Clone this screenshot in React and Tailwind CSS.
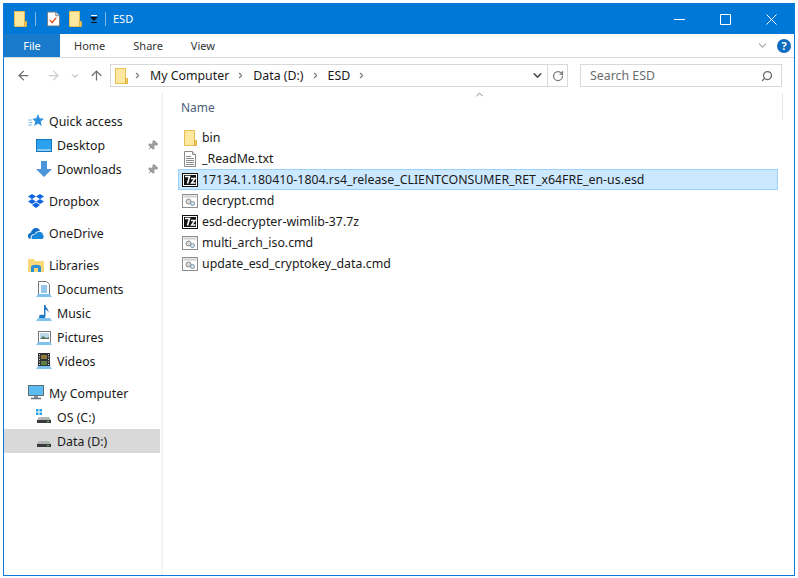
import React from 'react'
import { ArrowLeft, ArrowRight, ArrowUp, ChevronDown, ChevronRight, ChevronUp, RotateCw, Search, Pin } from 'lucide-react'

function Folder({ size = 16 }) {
  return (
    <svg width={size} height={size} viewBox="0 0 16 16" className="shrink-0">
      <path d="M2.500.5h10v15h-10z" fill="#fde08a" stroke="#e8bd52" />
      <path d="M12.500 10.500h2v5h-2z" fill="#f4cf6a" stroke="#e0ae3e" />
      <path d="M3 1h9v14H3z" fill="#fde89f" />
    </svg>
  )
}

function ChecklistIcon() {
  return (
    <svg width="13" height="16" viewBox="0 0 14 16" className="shrink-0">
      <path d="M.5.5h9l4 4v11H.5z" fill="#fff" stroke="#77787a" />
      <path d="M9.500.5v4h4" fill="#e6e6e6" stroke="#77787a" />
      <path d="M3 9l2.500 3L10 6.500" fill="none" stroke="#e2521d" strokeWidth="1.500" />
    </svg>
  )
}

function Qat() {
  return (
    <svg width="8" height="8" viewBox="0 0 8 8" className="shrink-0">
      <path d="M1 0h6v1H1z" fill="#fff" />
      <path d="M0 2h8L4 6z" fill="#111" />
      <path d="M1 7h6v1H1z" fill="#111" />
    </svg>
  )
}

function SevenZip() {
  return (
    <svg width="16" height="14" viewBox="0 0 16 14" className="shrink-0">
      <rect width="16" height="14" fill="#111" />
      <rect x="1" y="1" width="14" height="12" fill="#fff" />
      <rect x="2" y="2" width="12" height="10" fill="#111" />
      <path d="M3 3.500h4.500L5.500 10.500" fill="none" stroke="#fff" strokeWidth="1.600" />
      <path d="M9 5.500h4L9.500 10h4" fill="none" stroke="#fff" strokeWidth="1.400" />
    </svg>
  )
}

function CmdIcon() {
  return (
    <svg width="16" height="14" viewBox="0 0 16 14" className="shrink-0">
      <rect x=".5" y=".5" width="15" height="13" fill="#fff" stroke="#8e8e8e" />
      <rect x="1.500" y="1.500" width="13" height="2" fill="#cfcfcf" />
      <circle cx="6.500" cy="7.500" r="2.500" fill="#d9d9d9" stroke="#8a8a8a" />
      <circle cx="10.500" cy="9.500" r="2" fill="#d5e6f3" stroke="#7d93a5" />
    </svg>
  )
}

function TxtIcon() {
  return (
    <svg width="16" height="16" viewBox="0 0 16 16" className="shrink-0">
      <path d="M2.500.5h8l3 3v12h-11z" fill="#fff" stroke="#8a8a8a" />
      <path d="M10.500.5v3h3" fill="#e8e8e8" stroke="#8a8a8a" />
      <path d="M4 5.500h5M4 7.500h8M4 9.500h8M4 11.500h8M4 13.500h8" stroke="#8a8a8a" />
    </svg>
  )
}

function QuickAccess() {
  return (
    <svg width="16" height="16" viewBox="0 0 16 16">
      <path d="M10 1l1.700 4.300 4.300.4-3.300 2.900 1 4.400-3.700-2.400-3.700 2.400 1-4.400-3-2.900 4-.4z" fill="#2b8fe0" />
      <path d="M0 7h4M1 9.500h3M0 12h4" stroke="#7cc0ee" />
    </svg>
  )
}

function DesktopIcon() {
  return (
    <svg width="16" height="13" viewBox="0 0 16 13">
      <rect x=".5" y=".5" width="15" height="12" fill="#2aa2f0" stroke="#1476bd" />
      <path d="M1 11h14" stroke="#e8f5ff" />
    </svg>
  )
}

function DownloadsIcon() {
  return (
    <svg width="16" height="16" viewBox="0 0 16 16">
      <path d="M5 0h6v8h5l-8 8-8-8h5z" fill="#4a94dc" />
    </svg>
  )
}

function Dropbox() {
  return (
    <svg width="16" height="15" viewBox="0 0 16 15">
      <path d="M4 0l4 2.500L4 5 0 2.500zM12 0l4 2.500L12 5 8 2.500zM4 5l4 2.500L4 10 0 7.500zM12 5l4 2.500-4 2.500-4-2.500zM4 11l4-2.500 4 2.500-4 3z" fill="#0d63e0" />
    </svg>
  )
}

function OneDrive() {
  return (
    <svg width="16" height="11" viewBox="0 0 16 11">
      <path d="M0 8c0-2 1-3 2.500-3C3.500 2 5.500 0 8 0c2 0 3.500 1 4 3-3 0-4.500 1-5.500 3C4 6 2.500 7 2.500 11 1 11 0 10 0 8z" fill="#0f6fc6" />
      <path d="M4 11c-1.500-3 1-4.500 3-4.500C8 4.500 10 4 12 4c2 0 3 1.500 3 3 1 .5 1 4-1 4z" fill="#1a86d9" />
    </svg>
  )
}

function LibrariesIcon() {
  return (
    <svg width="16" height="13" viewBox="0 0 16 13">
      <path d="M0 0h6l1 2h9v11H0z" fill="#fbd877" />
      <path d="M3 13V8c0-3 10-3 10 0v5h-3V9H6v4z" fill="#2d8fd5" />
    </svg>
  )
}

function Stand() {
  return <path d="M2 13h12l2 3H0z" fill="#7fc4ee" />
}

function DocumentsIcon() {
  return (
    <svg width="16" height="16" viewBox="0 0 16 16">
      <path d="M2.500.5h8l3 3V14h-11z" fill="#fff" stroke="#777" />
      <path d="M5 5h6M5 7h6M5 9h6M5 11h6" stroke="#2d8fd5" />
      <Stand />
    </svg>
  )
}

function MusicIcon() {
  return (
    <svg width="16" height="16" viewBox="0 0 16 16">
      <path d="M8 0h1.500c0 3 3.500 3.500 3 8-.5-2-1.500-3-3-3.500V11c0 2-1.500 3-3.500 3S3 13 3 11.500 5 9.500 8 10z" fill="#1e78c8" />
      <Stand />
    </svg>
  )
}

function PicturesIcon() {
  return (
    <svg width="16" height="15" viewBox="0 0 16 15">
      <rect x="2.500" y="1.500" width="12" height="11" fill="#fff" stroke="#777" />
      <rect x="4" y="3" width="9" height="6" fill="#bcd8ea" />
      <path d="M4 9l3-3 3 2 3-1v2z" fill="#59795e" />
      <path d="M2 12h12l2 3H0z" fill="#7fc4ee" />
    </svg>
  )
}

function VideosIcon() {
  return (
    <svg width="16" height="16" viewBox="0 0 16 16">
      <rect x="2" y="0" width="12" height="14" fill="#2f3237" />
      <path d="M3 1.500h1M3 4h1M3 6.500h1M3 9h1M3 11.500h1M12 1.500h1M12 4h1M12 6.500h1M12 9h1M12 11.500h1" stroke="#ddd" />
      <rect x="5" y="2" width="6" height="4" fill="#8c7b3c" />
      <rect x="5" y="8" width="6" height="4" fill="#5d7f46" />
      <Stand />
    </svg>
  )
}

function ComputerIcon() {
  return (
    <svg width="16" height="16" viewBox="0 0 16 16">
      <rect x=".5" y=".5" width="15" height="10" fill="#5cbcf2" stroke="#5c6c78" />
      <path d="M6 11h4v2H6z" fill="#8a949c" />
      <path d="M3 13.500h10" stroke="#67727a" strokeWidth="1.500" />
    </svg>
  )
}

function DriveIcon({ windows }) {
  return (
    <svg width="16" height="16" viewBox="0 0 16 16">
      {windows && <path d="M0 0h2.500v2.500H0zM3.500 0H6v2.500H3.500zM0 3.500h2.500V6H0zM3.500 3.500H6V6H3.500z" fill="#1fa3e8" />}
      <path d="M3 8h10l2 3H1z" fill="#b5b5b5" />
      <rect x="1" y="11" width="14" height="3" fill="#3a3a3a" />
      <path d="M11 12.500h2" stroke="#4fd64f" />
    </svg>
  )
}

function CaptionIcon({ d }) {
  return (
    <svg width="11" height="11" viewBox="0 0 11 11" fill="none" stroke="#fff">
      <path d={d} />
    </svg>
  )
}

const navGroups = [
  { items: [
    { label: 'Quick access', icon: <QuickAccess /> },
    { label: 'Desktop', icon: <DesktopIcon />, sub: true, pin: true },
    { label: 'Downloads', icon: <DownloadsIcon />, sub: true, pin: true },
  ] },
  { items: [{ label: 'Dropbox', icon: <Dropbox /> }] },
  { items: [{ label: 'OneDrive', icon: <OneDrive /> }] },
  { items: [
    { label: 'Libraries', icon: <LibrariesIcon /> },
    { label: 'Documents', icon: <DocumentsIcon />, sub: true },
    { label: 'Music', icon: <MusicIcon />, sub: true },
    { label: 'Pictures', icon: <PicturesIcon />, sub: true },
    { label: 'Videos', icon: <VideosIcon />, sub: true },
  ] },
  { items: [
    { label: 'My Computer', icon: <ComputerIcon /> },
    { label: 'OS (C:)', icon: <DriveIcon windows />, sub: true },
    { label: 'Data (D:)', icon: <DriveIcon />, sub: true, active: true },
  ] },
]

const files = [
  { name: 'bin', icon: <Folder /> },
  { name: '_ReadMe.txt', icon: <TxtIcon /> },
  { name: '17134.1.180410-1804.rs4_release_CLIENTCONSUMER_RET_x64FRE_en-us.esd', icon: <SevenZip />, selected: true },
  { name: 'decrypt.cmd', icon: <CmdIcon /> },
  { name: 'esd-decrypter-wimlib-37.7z', icon: <SevenZip /> },
  { name: 'multi_arch_iso.cmd', icon: <CmdIcon /> },
  { name: 'update_esd_cryptokey_data.cmd', icon: <CmdIcon /> },
]

function NavRow({ item }) {
  return (
    <div className={`h-6 flex items-center ${item.sub ? 'pl-[32px]' : 'pl-[24px]'} ${item.active ? 'bg-[#d9d9d9]' : ''}`}>
      <span className="w-4 flex justify-center shrink-0">{item.icon}</span>
      <span className="ml-[5px] pt-[2px] text-[#1a1a1a]">{item.label}</span>
      {item.pin && <Pin size={11} className="ml-auto mr-[2px] rotate-45 text-[#8a8a8a] fill-[#a0a0a0]" />}
    </div>
  )
}

function Crumb({ label }) {
  return (
    <>
      <span className="ml-[8px] pt-[2px] text-[#1a1a1a]">{label}</span>
      <ChevronRight size={9} strokeWidth={3} className="ml-[7px] text-[#777]" />
    </>
  )
}

export default function App() {
  return (
    <div className="w-[798px] h-[578px] bg-white p-[3px] text-[12.35px] leading-none font-['Noto_Sans','Open_Sans',sans-serif] overflow-hidden">
      <div className="w-[792px] h-[573px] border border-[#0a78d7] flex flex-col">
        {/* title bar */}
        <div className="h-[30px] bg-[#0078d7] flex items-center pl-[8px] text-white shrink-0">
          <Folder />
          <span className="w-px h-[14px] bg-[#7db8e8] ml-[7px]" />
          <span className="ml-[11px]"><ChecklistIcon /></span>
          <span className="ml-[7px]"><Folder /></span>
          <span className="ml-[7px]"><Qat /></span>
          <span className="w-px h-[14px] bg-[#7db8e8] ml-[7px]" />
          <span className="ml-[7px] pb-[2px] text-[11px]">ESD</span>
          <div className="ml-auto flex items-center">
            <span className="w-[46px] flex justify-center"><CaptionIcon d="M0 5.500h11" /></span>
            <span className="w-[46px] flex justify-center"><CaptionIcon d="M.5.5h10v10H.5z" /></span>
            <span className="w-[46px] flex justify-center"><CaptionIcon d="M.5.5l10 10M10.500.5l-10 10" /></span>
          </div>
        </div>
        {/* tabs */}
        <div className="h-[24px] flex items-center border-b border-[#dadbdc] text-[11px] text-[#333] shrink-0">
          <span className="w-[56px] h-full bg-[#1979ca] text-white flex items-center justify-center">File</span>
          <span className="ml-[14px]">Home</span>
          <span className="ml-[28px]">Share</span>
          <span className="ml-[28px]">View</span>
          <ChevronDown size={13} className="ml-auto text-[#a5a5a5]" />
          <span className="ml-[8px] mr-[3px] w-[14px] h-[14px] rounded-full bg-[#0e6cc0] text-white text-[11px] font-bold flex items-center justify-center">?</span>
        </div>
        {/* address row */}
        <div className="h-[35px] flex items-center shrink-0">
          <ArrowLeft size={15} className="ml-[12px] text-[#6d6d6d]" />
          <ArrowRight size={15} className="ml-[15px] text-[#cfcfcf]" />
          <ChevronDown size={10} className="ml-[9px] text-[#8a8a8a]" />
          <ArrowUp size={15} className="ml-[9px] text-[#6d6d6d]" />
          <div className="ml-[6px] w-[458px] h-[23px] border border-[#d9d9d9] flex items-center">
            <span className="ml-[2px]"><Folder /></span>
            <ChevronRight size={9} strokeWidth={3} className="ml-[4px] text-[#777]" />
            <Crumb label="My Computer" />
            <Crumb label="Data (D:)" />
            <Crumb label="ESD" />
            <ChevronDown size={13} strokeWidth={3} className="ml-auto mr-[3px] text-[#555]" />
            <span className="w-[20px] h-full border-l border-[#d9d9d9] flex items-center justify-center">
              <RotateCw size={12} strokeWidth={2.500} className="text-[#777]" />
            </span>
          </div>
          <div className="ml-[12px] w-[202px] h-[23px] border border-[#d9d9d9] flex items-center pl-[9px] pr-[8px] text-[#6d6d6d]">
            <span className="pt-[2px]">Search ESD</span>
            <Search size={12} className="ml-auto -scale-x-100 text-[#666]" strokeWidth={2.500} />
          </div>
        </div>
        {/* body */}
        <div className="flex-1 flex min-h-0">
          <div className="w-[159px] border-r-2 border-[#f3f3f3] pr-px shrink-0 mr-[2px] pt-[16px] flex flex-col gap-[8px]">
            {navGroups.map((group, i) => (
              <div key={i}>
                {group.items.map(item => <NavRow key={item.label} item={item} />)}
              </div>
            ))}
          </div>
          <div className="flex-1 pl-[13px] pr-[16px] min-w-0 relative">
            <ChevronUp size={11} className="absolute left-[309px] -top-[4px] text-[#777]" />
            <div className="h-[27px] flex items-center text-[12px] text-[#4c607a] pl-[3px] border-r border-[#e5e5e5] -mr-[5px] pt-[2px]">Name</div>
            <div className="pt-[7px]">
              {files.map(f => (
                <div key={f.name} className={`h-[21px] flex items-center pl-[3px] border ${f.selected ? 'bg-[#cce8ff] border-[#99d1ff]' : 'border-transparent'}`}>
                  <span className="w-4 flex justify-center shrink-0">{f.icon}</span>
                  <span className="ml-[4px] pt-[2px] text-[#1a1a1a]">{f.name}</span>
                </div>
              ))}
            </div>
          </div>
        </div>
      </div>
    </div>
  )
}
